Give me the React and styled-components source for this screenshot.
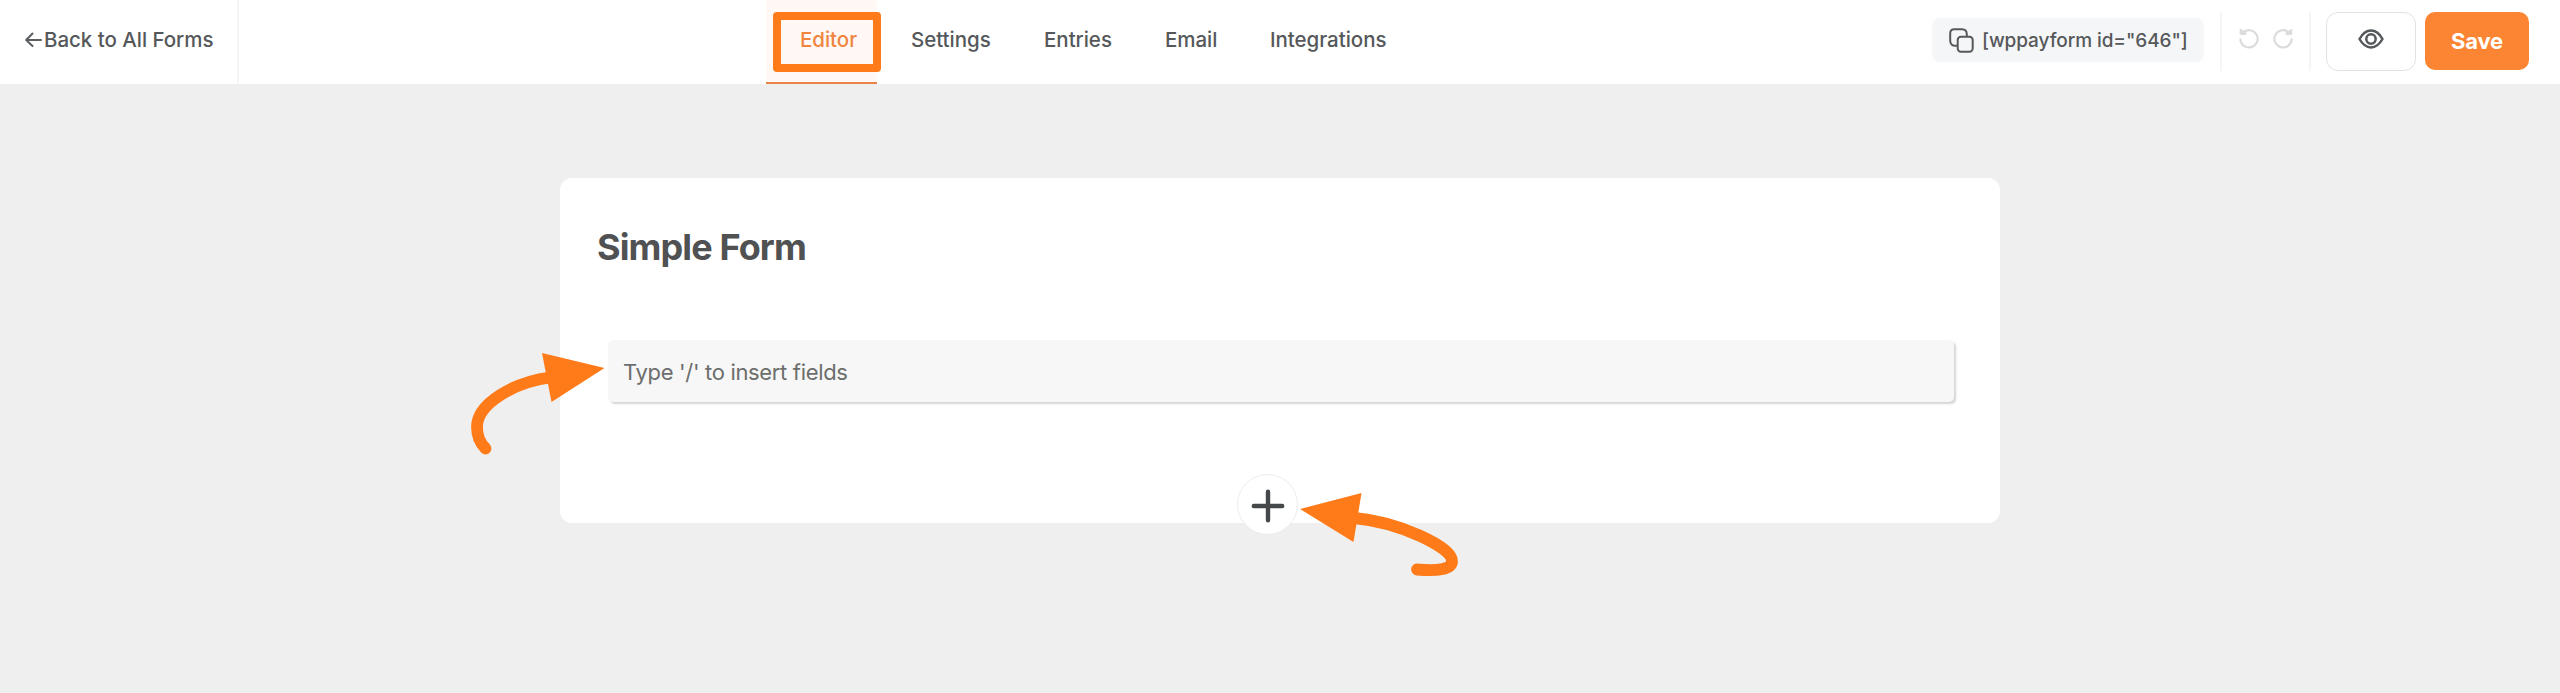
import React from "react";
import styled, { createGlobalStyle } from "styled-components";

const ACCENT = "#ff7a18";

const GlobalStyle = createGlobalStyle`
  *, *::before, *::after { box-sizing: border-box; }
  body { margin: 0; background: #efefef; font-family: Inter, "Liberation Sans", sans-serif; color: #55585a; }
  button, input { font: inherit; }
`;

const Page = styled.div`
  position: relative;
  min-height: 693px;
  background: #efefef;
`;

const Header = styled.header`
  display: flex;
  height: 84px;
  background: #fff;
`;

const BackLink = styled.a`
  display: flex;
  align-items: center;
  width: 239px;
  padding: 0 0 5px 25px;
  gap: 1px;
  border-right: 2px solid #f6f6f6;
  font-size: 20.5px;
  font-weight: 500;
  letter-spacing: -0.03px;
  white-space: nowrap;
`;

const Nav = styled.nav`
  display: flex;
  margin-left: 527px;
`;

const Tab = styled.a`
  display: flex;
  align-items: center;
  width: ${(p) => p.$width}px;
  padding: 0 0 ${(p) => (p.$active ? 4 : 6)}px 34px;
  background: ${(p) => (p.$active ? "#fff8f4" : "transparent")};
  border-bottom: ${(p) => (p.$active ? "2px solid #e8834a" : "0")};
  color: ${(p) => (p.$active ? "#f0853f" : "inherit")};
  font-size: 20.5px;
  font-weight: 500;
  letter-spacing: -0.03px;
  white-space: nowrap;
`;

const Highlight = styled.div`
  position: absolute;
  left: 773px;
  top: 12px;
  width: 108px;
  height: 60px;
  border: 8px solid ${ACCENT};
  border-radius: 4px;
`;

const Actions = styled.div`
  display: flex;
  align-items: flex-start;
  margin-left: auto;
  padding: 12px 31px 0 0;
`;

const Shortcode = styled.div`
  display: flex;
  align-items: center;
  width: 272px;
  height: 44px;
  margin: 6px 16px 0 0;
  padding-left: 17px;
  gap: 8px;
  border-radius: 8px;
  background: #f5f6f7;
  font-size: 19px;
  font-weight: 500;
  letter-spacing: -0.08px;
  white-space: nowrap;
`;

const History = styled.div`
  display: flex;
  align-items: flex-start;
  width: 91px;
  height: 59px;
  margin-right: 15px;
  padding: 16px 0 0 17px;
  gap: 14px;
  border: solid #f5f5f5;
  border-width: 0 2px;
`;

const PreviewButton = styled.button`
  display: flex;
  align-items: flex-start;
  justify-content: center;
  width: 90px;
  height: 59px;
  margin-right: 9px;
  padding: 16px 0 0;
  border: 1px solid #e2e2e4;
  border-radius: 12px;
  background: #fff;
`;

const SaveButton = styled.button`
  width: 104px;
  height: 58px;
  padding: 0;
  border: 0;
  border-radius: 10px;
  background: #fb8532;
  color: #fff;
  font-size: 22px;
  font-weight: 700;
  letter-spacing: -0.2px;
`;

const FormCard = styled.main`
  display: flex;
  flex-direction: column;
  width: 1440px;
  height: 345px;
  margin: 94px auto 0;
  padding: 47px 45px 0 37px;
  border-radius: 12px;
  background: #fff;
`;

const Title = styled.h1`
  margin: 0;
  font-size: 36px;
  line-height: 44px;
  font-weight: 700;
  letter-spacing: -0.88px;
  color: #4f5152;
`;

const FieldInput = styled.div`
  height: 62px;
  margin: 71px 1px 0 11px;
  padding-left: 15px;
  border-radius: 5px;
  background: #f7f7f7;
  box-shadow: 2px 2px 2px #d6d6d6;
  font-size: 22px;
  line-height: 64px;
  letter-spacing: -0.33px;
  color: #6c6e6c;
`;

const AddButton = styled.button`
  display: flex;
  align-items: center;
  justify-content: center;
  flex: none;
  width: 61px;
  height: 61px;
  margin: 72px 0 0 640px;
  padding: 2px 0 0;
  border: 1px solid #ececec;
  border-radius: 50%;
  background: #fff;
`;

const Pointer = styled.svg`
  position: absolute;
  left: ${(p) => p.$left}px;
  top: ${(p) => p.$top}px;
`;

const BackArrow = () => (
  <svg width="18" height="18" viewBox="0 0 18 18" fill="none" stroke="#5c5f61" strokeWidth="2" strokeLinecap="round" strokeLinejoin="round">
    <path d="M16 9H1.5M7.5 2.5L1.2 9L7.5 15" />
  </svg>
);

const CopyIcon = () => (
  <svg width="25" height="25" viewBox="0 0 25 25" fill="none" stroke="#56595b" strokeWidth="2">
    <path d="M8.7 17.8H6.2C3.2 17.8 1.2 15.8 1.2 12.8V5.2C1.2 2.7 2.7 1.2 5.2 1.2H13C16 1.2 17.8 3.2 17.8 6.2V8.7" />
    <rect x="8.7" y="8.7" width="15" height="15" rx="3.2" />
  </svg>
);

const RotateIcon = ({ flipped }) => (
  <svg width="20" height="22" viewBox="0 0 20 22">
    <g transform={flipped ? "translate(20 0) scale(-1 1)" : undefined} fill="none" stroke="#dcdcdc" strokeWidth="2.2">
      <path d="M4.8 4A8.6 8.6 0 1 1 1.4 10.5" />
      <path d="M1.2 1.2V6.4H7V4.6Z" fill="#dcdcdc" strokeWidth="1" />
    </g>
  </svg>
);

const EyeIcon = () => (
  <svg width="26" height="20" viewBox="0 0 26 20" fill="none" stroke="#55585a" strokeWidth="2.5" strokeLinejoin="round">
    <path d="M1.5 10C4.7 4.3 8.4 1.6 13 1.6S21.3 4.3 24.5 10C21.3 15.7 17.6 18.4 13 18.4S4.7 15.7 1.5 10Z" />
    <circle cx="13" cy="10" r="4.7" />
  </svg>
);

const PlusIcon = () => (
  <svg width="34" height="34" viewBox="0 0 34 34" stroke="#45484a" strokeWidth="4.4" strokeLinecap="round">
    <path d="M17 2.8V31.2M2.8 17H31.2" />
  </svg>
);

const TABS = [
  { label: "Editor", width: 111, active: true },
  { label: "Settings", width: 133 },
  { label: "Entries", width: 121 },
  { label: "Email", width: 105 },
  { label: "Integrations", width: 160 },
];

export default function App() {
  return (
    <Page>
      <GlobalStyle />
      <Header>
        <BackLink>
          <BackArrow />
          Back to All Forms
        </BackLink>
        <Nav>
          {TABS.map((tab) => (
            <Tab key={tab.label} $width={tab.width} $active={tab.active}>
              {tab.label}
            </Tab>
          ))}
        </Nav>
        <Actions>
          <Shortcode>
            <CopyIcon />
            <span>[wppayform id="646"]</span>
          </Shortcode>
          <History>
            <RotateIcon />
            <RotateIcon flipped />
          </History>
          <PreviewButton aria-label="Preview">
            <EyeIcon />
          </PreviewButton>
          <SaveButton>Save</SaveButton>
        </Actions>
      </Header>
      <FormCard>
        <Title>Simple Form</Title>
        <FieldInput>Type '/' to insert fields</FieldInput>
        <AddButton aria-label="Add field">
          <PlusIcon />
        </AddButton>
      </FormCard>
      <Highlight />
      <Pointer $left={464} $top={350} width="144" height="110" viewBox="0 0 144 110">
        <path d="M86 27.5C51 32 13 53 13 77C13 86 16 93 21.5 98.5" fill="none" stroke={ACCENT} strokeWidth="11.8" strokeLinecap="round" />
        <path d="M78 3L140.5 18L87.5 52Z" fill={ACCENT} />
      </Pointer>
      <Pointer $left={1298} $top={490} width="164" height="90" viewBox="0 0 164 90">
        <path d="M56 28C101 32 154 57 154 71C154 80 138 81 119 79.5" fill="none" stroke={ACCENT} strokeWidth="11.8" strokeLinecap="round" />
        <path d="M2 19L63.5 3L55.5 52Z" fill={ACCENT} />
      </Pointer>
    </Page>
  );
}
